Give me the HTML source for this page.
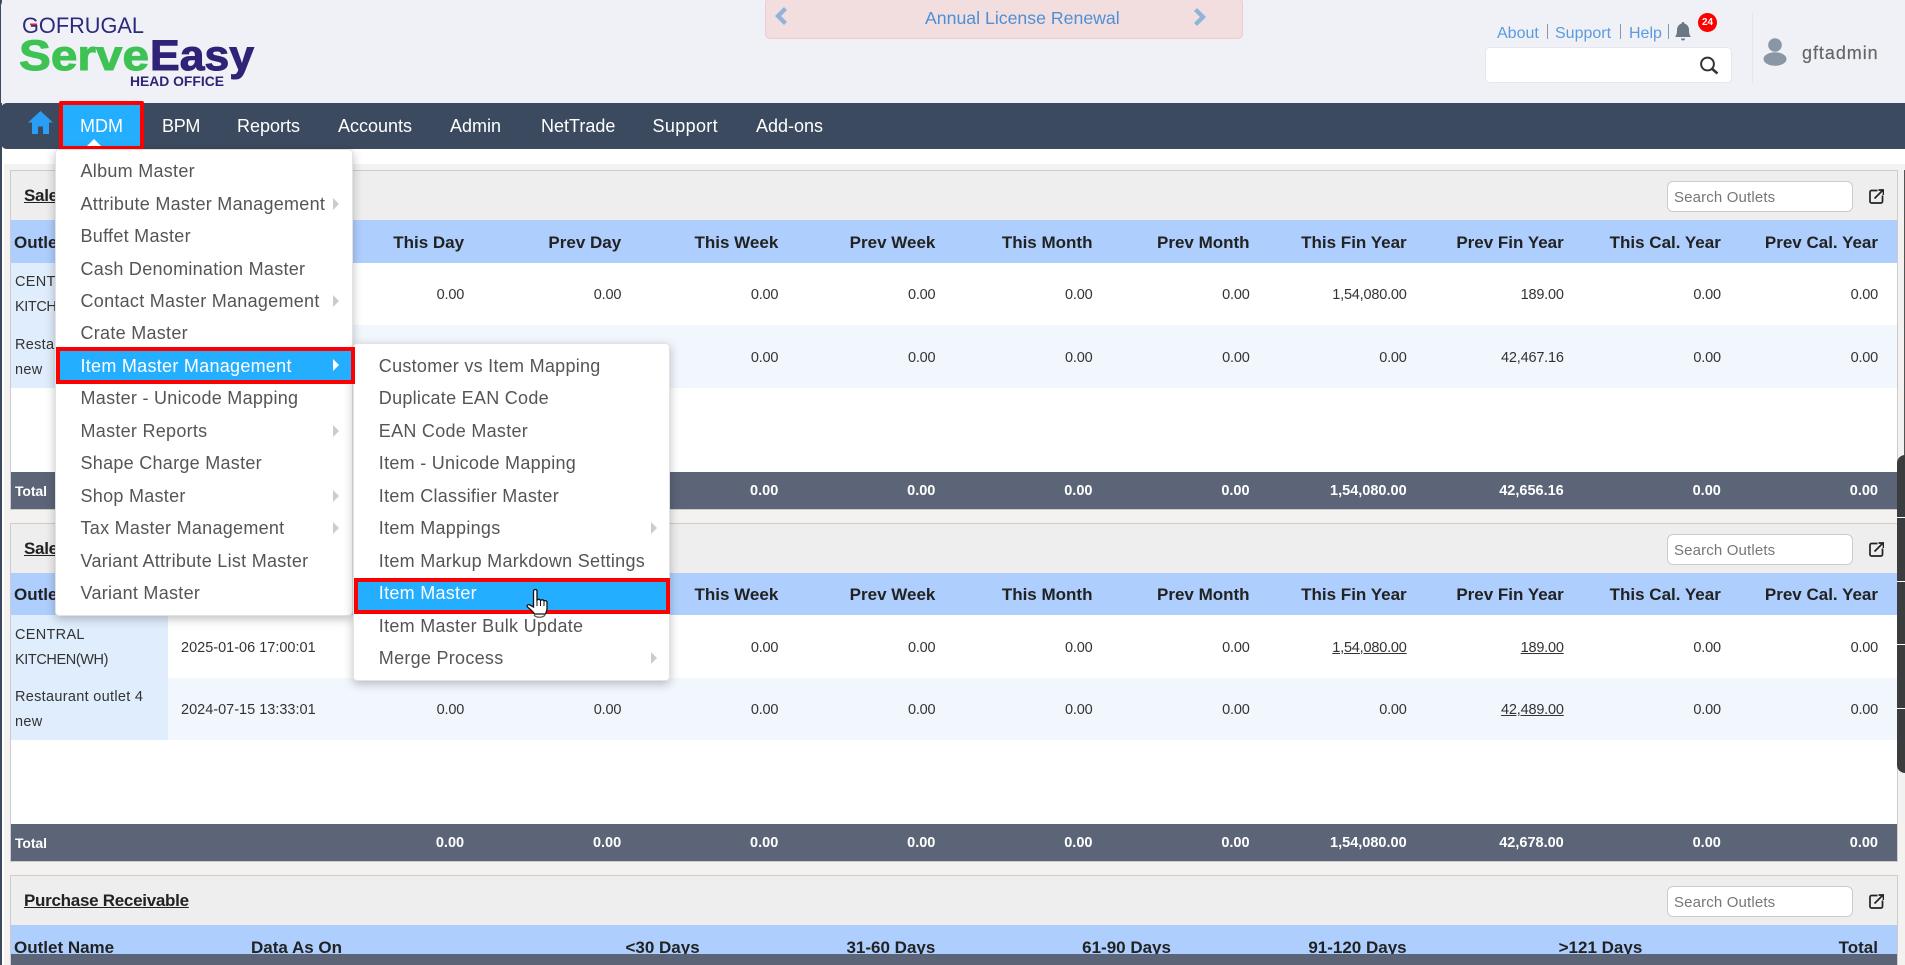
<!DOCTYPE html>
<html><head><meta charset="utf-8"><title>ServeEasy</title>
<style>
html,body{margin:0;padding:0;width:1905px;height:965px;overflow:hidden}
#page{width:1905px;height:965px;overflow:hidden;position:relative;background:#f3f2f0;font-family:"Liberation Sans",sans-serif;color:#333}
#hdr{left:1px;top:0;width:1904px;height:103px;background:#f0f1f7;border-top-left-radius:6px}
#edge{left:0;top:0;width:2px;height:965px;background:#3c4a5f}
#white{left:2px;top:149px;width:1903px;height:15px;background:#fff}
#wl{left:2px;top:149px;width:2px;height:816px;background:#fff}
#nav{position:absolute;left:1px;top:103px;width:1904px;height:46px;background:#3c4a5f;border-radius:6px 0 0 6px}
.n{position:absolute;top:103px;line-height:46px;font-size:18px;color:#fff;white-space:nowrap}
#mdm{position:absolute;left:59px;top:101px;width:77px;height:41px;background:#24aeff;border:4px solid #f00;border-radius:2px}
#tri{position:absolute;left:87px;top:139px;width:0;height:0;border-left:7px solid transparent;border-right:7px solid transparent;border-bottom:7px solid #fff}
#banner{position:absolute;left:765px;top:-2px;width:476px;height:39px;background:#f2dede;border:1px solid #ebccd1;border-radius:5px;text-align:center}
#banner span{position:absolute;left:159px;top:3px;line-height:33px;font-size:17.7px;color:#4d8fd6;white-space:nowrap}
.tl{position:absolute;top:24px;line-height:20px;font-size:16px;color:#5b9bdc;white-space:nowrap}
.sep{position:absolute;top:24px;width:1px;height:15px;background:#8b98a8}
#sbox{position:absolute;left:1485px;top:47px;width:245px;height:34px;background:#fff;border:1px solid #e6e7ee;border-radius:5px}
#vd{position:absolute;left:1752px;top:13px;width:1px;height:70px;background:#e3e4ec}
#uname{position:absolute;left:1802px;top:41px;line-height:24px;font-size:18px;color:#666;letter-spacing:.95px;-webkit-text-stroke:.2px #666}
#badge{position:absolute;left:1698px;top:13px;width:19px;height:19px;border-radius:50%;background:#f00;color:#fff;font-size:10px;font-weight:bold;text-align:center;line-height:19px}
.panel{position:absolute;left:10px;width:1886px;background:#eee;border:1px solid #ccc}
.title{position:absolute;left:13px;top:12px;line-height:26px;font-size:17px;letter-spacing:-.28px;font-weight:bold;color:#222;text-decoration:underline;white-space:nowrap}
.search{position:absolute;left:1656px;top:10px;width:184px;height:29px;background:#fff;border:1px solid #ccc;border-radius:6px;font-size:15px;line-height:31px;color:#777;text-indent:6px;letter-spacing:.15px}
.ext{position:absolute;left:1858px;top:18px}
table{position:absolute;left:0;top:49px;width:1886px;border-collapse:collapse;table-layout:fixed}
td,th{padding:0 19px 0 0;text-align:right;white-space:nowrap;overflow:hidden}
th{background:#aecffe;font-size:17px;font-weight:bold;color:#222;padding-top:2px}
td{font-size:14.5px;letter-spacing:-.2px;color:#333;padding-top:2px}
.o{text-align:left;padding:2px 4px 0;background:#e0edfc;line-height:25px;white-space:nowrap;font-size:14.5px;letter-spacing:.3px}
.o span{letter-spacing:-.4px}
th.o,th.d{text-align:left;background:#aecffe;font-size:17px;letter-spacing:0;line-height:normal;white-space:nowrap;padding-top:2px}
th.o{padding-left:3px}
.d{text-align:left;padding:2px 0 0 13px;letter-spacing:0}
.alt td{background:#f2f7fe}.alt td.o{background:#e0edfc}
.sp td{background:#fff;padding:0}
.tot td{background:#5b6577;color:#fff;font-weight:bold;letter-spacing:0;padding-top:1px}
.tot td:first-child{text-align:left;padding-left:4px;font-size:14px;letter-spacing:-.1px}
tr.b td{background:#fff}tr.b td.o{background:#e0edfc}
u{text-decoration:underline}
#bar{position:absolute;left:11px;top:954px;width:1886px;height:11px;background:#5b6577}
.menu{position:absolute;background:#fff;border-radius:4px;box-shadow:0 3px 10px rgba(0,0,0,.25);border:1px solid #e2e2e2;box-sizing:border-box}
.mi{position:absolute;height:32.46px;line-height:33px;font-size:18px;letter-spacing:.28px;color:#555;white-space:nowrap}
.m1{left:80.5px}.m2{left:378.8px}
.car{position:absolute;width:0;height:0;border-left:6px solid #ccc;border-top:6px solid transparent;border-bottom:6px solid transparent}
.hl{position:absolute;background:#24aeff;border:4px solid #f00;box-sizing:border-box}
#scr{position:absolute;left:1897px;top:455px;width:8px;height:318px;background:#3a3c3e;border-radius:9px 0 0 9px}
#scr i{position:absolute;left:0;width:8px;height:1px;background:#fff}
#rl{position:absolute;left:1904px;top:170px;width:1px;height:285px;background:#555}
</style></head><body>
<div id="page">
<div id="edge" style="position:absolute"></div>
<div id="hdr" style="position:absolute"></div>
<div id="white" style="position:absolute"></div>
<div id="wl" style="position:absolute"></div>

<svg style="position:absolute;left:0;top:0" width="270" height="100" viewBox="0 0 270 100">
<text x="22" y="33" font-family="Liberation Sans" font-size="22" fill="#2d2a7a" textLength="122" lengthAdjust="spacingAndGlyphs">GOFRUGAL</text>
<rect x="30" y="23.5" width="7" height="1.6" fill="#e8202c"/>
<text x="19" y="70" font-family="Liberation Sans" font-weight="bold" font-size="43" fill="#3fc254" stroke="#3fc254" stroke-width="1" textLength="130" lengthAdjust="spacingAndGlyphs">Serve</text>
<text x="150" y="70" font-family="Liberation Sans" font-weight="bold" font-size="43" fill="#2e2376" stroke="#2e2376" stroke-width="1" textLength="104" lengthAdjust="spacingAndGlyphs">Easy</text>
<text x="130" y="86" font-family="Liberation Sans" font-weight="bold" font-size="13.500" fill="#2e2376" textLength="94" lengthAdjust="spacingAndGlyphs">HEAD OFFICE</text>
</svg>

<div id="banner"><span>Annual License Renewal</span></div>
<svg style="position:absolute;left:774px;top:6px" width="14" height="20" viewBox="0 0 14 20"><path d="M10 1 L13 4 L7 10 L13 16 L10 19 L1 10 Z" fill="#8fb3d9"/></svg>
<svg style="position:absolute;left:1193px;top:7px" width="14" height="20" viewBox="0 0 14 20"><path d="M4 1 L1 4 L7 10 L1 16 L4 19 L13 10 Z" fill="#8fb3d9"/></svg>

<span class="tl" style="left:1497px">About</span><i class="sep" style="left:1547px"></i>
<span class="tl" style="left:1555px">Support</span><i class="sep" style="left:1620px"></i>
<span class="tl" style="left:1629px">Help</span><i class="sep" style="left:1668px"></i>
<svg style="position:absolute;left:1675px;top:22px" width="16" height="20" viewBox="0 0 16 20"><path d="M8 0c1 0 1.500.7 1.500 1.600C12.500 2.400 14 5 14 8c0 4 .9 5.600 2 7H0c1.100-1.400 2-3 2-7 0-3 1.500-5.600 4.500-6.400C6.500.7 7 0 8 0zM6 16.500h4a2 2 0 0 1-4 0z" fill="#6a7886"/></svg>
<div id="badge">24</div>
<div id="sbox"></div>
<svg style="position:absolute;left:1698px;top:55px" width="22" height="20" viewBox="0 0 22 20"><circle cx="9.500" cy="9" r="6.400" fill="none" stroke="#333" stroke-width="2"/><path d="M14 13.800 L19.500 18.500" stroke="#333" stroke-width="2.600"/></svg>
<div id="vd"></div>
<svg style="position:absolute;left:1763px;top:37px" width="24" height="30" viewBox="0 0 24 30"><circle cx="12" cy="8" r="6.800" fill="#8896a5"/><ellipse cx="12" cy="22" rx="11.500" ry="6.800" fill="#8896a5"/></svg>
<div id="uname">gftadmin</div>

<div id="nav"></div>
<svg style="position:absolute;left:28px;top:111px" width="25" height="23" viewBox="0 0 25 23"><path d="M12.500 0 L25 11.500 H21 V23 H15 V15.500 H10 V23 H4 V11.500 H0 Z" fill="#2a9df4"/></svg>
<div id="mdm"></div><div id="tri"></div>
<span class="n" style="left:80px">MDM</span>
<span class="n" style="left:162px;letter-spacing:-.3px">BPM</span>
<span class="n" style="left:237px">Reports</span>
<span class="n" style="left:338px">Accounts</span>
<span class="n" style="left:450px">Admin</span>
<span class="n" style="left:541px">NetTrade</span>
<span class="n" style="left:652.5px;letter-spacing:.35px">Support</span>
<span class="n" style="left:756px">Add-ons</span>

<!-- Panel 1 -->
<div class="panel" style="top:170px;height:338px">
<div class="title">Sales Summary</div>
<div class="search">Search Outlets</div>
<svg class="ext" width="15" height="15" viewBox="0 0 15 15"><path d="M8.500 1.500H2.500A1.500 1.500 0 0 0 1 3v9.500A1.500 1.500 0 0 0 2.500 14H12a1.500 1.500 0 0 0 1.500-1.500V6.500" fill="none" stroke="#222" stroke-width="1.700"/><path d="M5.500 9.500 L13.500 1.500 M9.500 1h5v5" fill="none" stroke="#222" stroke-width="1.700"/></svg>
<table><colgroup><col style="width:157px"><col style="width:158px"><col span="10" style="width:157.1px"></colgroup>
<tr style="height:43px"><th class="o">Outlet Name</th><th class="d">Data As On</th><th>This Day</th><th>Prev Day</th><th>This Week</th><th>Prev Week</th><th>This Month</th><th>Prev Month</th><th>This Fin Year</th><th>Prev Fin Year</th><th>This Cal. Year</th><th>Prev Cal. Year</th></tr>
<tr class="b" style="height:62px"><td class="o">CENTRAL<br><span>KITCHEN(WH)</span></td><td class="d">2025-01-06 17:00:01</td><td>0.00</td><td>0.00</td><td>0.00</td><td>0.00</td><td>0.00</td><td>0.00</td><td>1,54,080.00</td><td>189.00</td><td>0.00</td><td>0.00</td></tr>
<tr class="alt" style="height:63px"><td class="o">Restaurant outlet 4<br>new</td><td class="d">2024-07-15 13:33:01</td><td>0.00</td><td>0.00</td><td>0.00</td><td>0.00</td><td>0.00</td><td>0.00</td><td>0.00</td><td>42,467.16</td><td>0.00</td><td>0.00</td></tr>
<tr class="sp" style="height:84px"><td colspan="12"></td></tr>
<tr class="tot" style="height:37px"><td>Total</td><td></td><td>0.00</td><td>0.00</td><td>0.00</td><td>0.00</td><td>0.00</td><td>0.00</td><td>1,54,080.00</td><td>42,656.16</td><td>0.00</td><td>0.00</td></tr>
</table></div>

<!-- Panel 2 -->
<div class="panel" style="top:523px;height:337px">
<div class="title">Sales Summary</div>
<div class="search">Search Outlets</div>
<svg class="ext" width="15" height="15" viewBox="0 0 15 15"><path d="M8.500 1.500H2.500A1.500 1.500 0 0 0 1 3v9.500A1.500 1.500 0 0 0 2.500 14H12a1.500 1.500 0 0 0 1.500-1.500V6.500" fill="none" stroke="#222" stroke-width="1.700"/><path d="M5.500 9.500 L13.500 1.500 M9.500 1h5v5" fill="none" stroke="#222" stroke-width="1.700"/></svg>
<table><colgroup><col style="width:157px"><col style="width:158px"><col span="10" style="width:157.1px"></colgroup>
<tr style="height:42px"><th class="o">Outlet Name</th><th class="d">Data As On</th><th>This Day</th><th>Prev Day</th><th>This Week</th><th>Prev Week</th><th>This Month</th><th>Prev Month</th><th>This Fin Year</th><th>Prev Fin Year</th><th>This Cal. Year</th><th>Prev Cal. Year</th></tr>
<tr class="b" style="height:63px"><td class="o">CENTRAL<br><span>KITCHEN(WH)</span></td><td class="d">2025-01-06 17:00:01</td><td>0.00</td><td>0.00</td><td>0.00</td><td>0.00</td><td>0.00</td><td>0.00</td><td><u>1,54,080.00</u></td><td><u>189.00</u></td><td>0.00</td><td>0.00</td></tr>
<tr class="alt" style="height:62px"><td class="o">Restaurant outlet 4<br>new</td><td class="d">2024-07-15 13:33:01</td><td>0.00</td><td>0.00</td><td>0.00</td><td>0.00</td><td>0.00</td><td>0.00</td><td>0.00</td><td><u>42,489.00</u></td><td>0.00</td><td>0.00</td></tr>
<tr class="sp" style="height:84px"><td colspan="12"></td></tr>
<tr class="tot" style="height:37px"><td>Total</td><td></td><td>0.00</td><td>0.00</td><td>0.00</td><td>0.00</td><td>0.00</td><td>0.00</td><td>1,54,080.00</td><td>42,678.00</td><td>0.00</td><td>0.00</td></tr>
</table></div>

<!-- Panel 3 -->
<div class="panel" style="top:875px;height:100px">
<div class="title">Purchase Receivable</div>
<div class="search">Search Outlets</div>
<svg class="ext" width="15" height="15" viewBox="0 0 15 15"><path d="M8.500 1.500H2.500A1.500 1.500 0 0 0 1 3v9.500A1.500 1.500 0 0 0 2.500 14H12a1.500 1.500 0 0 0 1.500-1.500V6.500" fill="none" stroke="#222" stroke-width="1.700"/><path d="M5.500 9.500 L13.500 1.500 M9.500 1h5v5" fill="none" stroke="#222" stroke-width="1.700"/></svg>
<table><colgroup><col style="width:240px"><col style="width:232px"><col span="6" style="width:235.67px"></colgroup>
<tr style="height:43px"><th class="o">Outlet Name</th><th class="d" style="padding-left:0">Data As On</th><th>&lt;30 Days</th><th>31-60 Days</th><th>61-90 Days</th><th>91-120 Days</th><th>&gt;121 Days</th><th>Total</th></tr>
</table></div>
<div id="bar"></div>

<div id="rl"></div>
<div id="scr"><i style="top:62px"></i><i style="top:126px"></i><i style="top:189px"></i><i style="top:253px"></i></div>

<!-- Menu surfaces -->
<div class="menu" style="left:55px;top:149px;width:298px;height:467px"></div>
<div class="menu" style="left:353px;top:343px;width:317px;height:338px"></div>
<div class="hl" style="left:56px;top:347px;width:299px;height:37px"></div>

<!-- Main dropdown -->
<span class="mi m1" style="top:155px">Album Master</span>
<span class="mi m1" style="top:188px">Attribute Master Management</span><i class="car" style="left:333px;top:198px"></i>
<span class="mi m1" style="top:220px">Buffet Master</span>
<span class="mi m1" style="top:253px">Cash Denomination Master</span>
<span class="mi m1" style="top:285px">Contact Master Management</span><i class="car" style="left:333px;top:295px"></i>
<span class="mi m1" style="top:317px">Crate Master</span>
<span class="mi m1" style="top:350px;color:#fff">Item Master Management</span><i class="car" style="left:333px;top:359px;border-left-color:#fff"></i>
<span class="mi m1" style="top:382px">Master - Unicode Mapping</span>
<span class="mi m1" style="top:415px">Master Reports</span><i class="car" style="left:333px;top:425px"></i>
<span class="mi m1" style="top:447px">Shape Charge Master</span>
<span class="mi m1" style="top:480px">Shop Master</span><i class="car" style="left:333px;top:490px"></i>
<span class="mi m1" style="top:512px">Tax Master Management</span><i class="car" style="left:333px;top:522px"></i>
<span class="mi m1" style="top:545px">Variant Attribute List Master</span>
<span class="mi m1" style="top:577px">Variant Master</span>

<!-- Submenu -->
<div class="hl" style="left:354px;top:578px;width:316px;height:36px"></div>
<span class="mi m2" style="top:350px">Customer vs Item Mapping</span>
<span class="mi m2" style="top:382px">Duplicate EAN Code</span>
<span class="mi m2" style="top:415px">EAN Code Master</span>
<span class="mi m2" style="top:447px">Item - Unicode Mapping</span>
<span class="mi m2" style="top:480px">Item Classifier Master</span>
<span class="mi m2" style="top:512px">Item Mappings</span><i class="car" style="left:651px;top:522px"></i>
<span class="mi m2" style="top:545px">Item Markup Markdown Settings</span>
<span class="mi m2" style="top:577px;color:#fff">Item Master</span>
<span class="mi m2" style="top:610px">Item Master Bulk Update</span>
<span class="mi m2" style="top:642px">Merge Process</span><i class="car" style="left:651px;top:652px"></i>

<svg style="position:absolute;left:526px;top:588px" width="24" height="31" viewBox="0 0 24 31">
<path d="M7.500 3c0-2 3.500-2 3.500 0V12c1-1 3-1 3.500.5 1-1 3-1 3.500.5 1-.8 3-.5 3 1.500v6c0 2.500-1 4-1.500 5.500H8.500C7.500 24 4.500 21.500 1.500 19c-1-1.500.5-3 2.500-2l3.500 2z" fill="#fff" stroke="#111" stroke-width="1.300"/>
<path d="M11 11v7M14.500 12.500V18M18 13v5" stroke="#111" stroke-width="1"/>
<path d="M8 27c2 3 9 3 11 0" fill="none" stroke="#555" stroke-width="1.300"/>
</svg>
</div>
</body></html>
